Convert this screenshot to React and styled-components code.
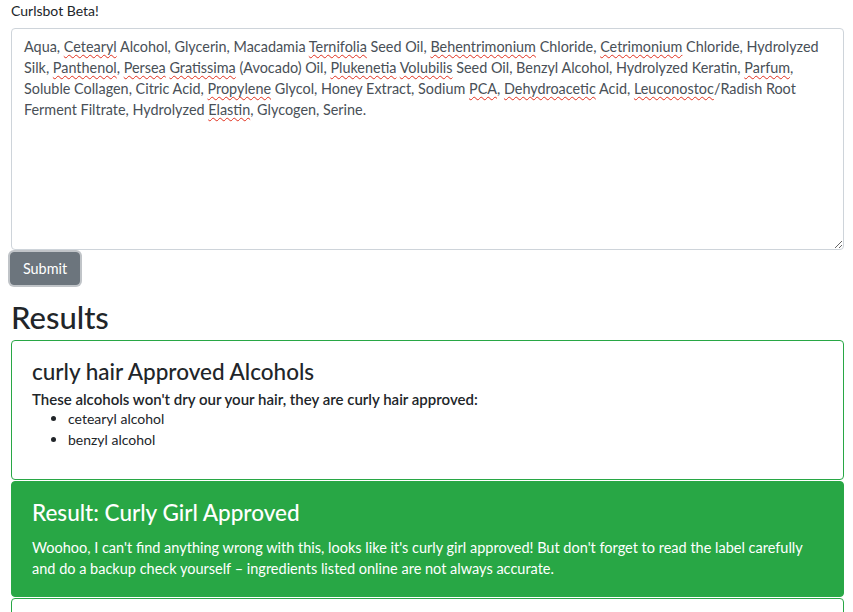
import styled, { createGlobalStyle } from 'styled-components';

const GlobalStyle = createGlobalStyle`
    body {
        margin: 0;
        background: #fff;
        font-family: Lato, "Open Sans", sans-serif;
        color: #212529;
    }
`;

const INGREDIENT_LINES = [
    [['Aqua, '], ['Cetearyl', true], [' Alcohol, Glycerin, Macadamia '], ['Ternifolia', true], [' Seed Oil, '], ['Behentrimonium', true], [' Chloride, '], ['Cetrimonium', true], [' Chloride, Hydrolyzed']],
    [['Silk, '], ['Panthenol', true], [', '], ['Persea', true], [' '], ['Gratissima', true], [' (Avocado) Oil, '], ['Plukenetia', true], [' '], ['Volubilis', true], [' Seed Oil, Benzyl Alcohol, Hydrolyzed Keratin, '], ['Parfum', true], [',']],
    [['Soluble Collagen, Citric Acid, '], ['Propylene', true], [' Glycol, Honey Extract, Sodium '], ['PCA', true], [', '], ['Dehydroacetic', true], [' Acid, '], ['Leuconostoc', true], ['/Radish Root']],
    [['Ferment Filtrate, Hydrolyzed '], ['Elastin', true], [', Glycogen, Serine.']],
];

const App = () => {
    return (
        <>
            <GlobalStyle />
            <Page>
                <Label>Curlsbot Beta!</Label>
                <TextBox role="textbox" aria-multiline="true">
                    {INGREDIENT_LINES.map((line, i) => (
                        <Line key={i}>
                            {line.map(([text, misspelt], j) =>
                                misspelt ? <Misspelt key={j}>{text}</Misspelt> : <span key={j}>{text}</span>
                            )}
                        </Line>
                    ))}
                </TextBox>
                <SubmitButton type="button">Submit</SubmitButton>
                <Heading>Results</Heading>
                <Card $height="140px">
                    <CardTitle>curly hair Approved Alcohols</CardTitle>
                    <CardLead>These alcohols won't dry our your hair, they are curly hair approved:</CardLead>
                    <List>
                        <li>cetearyl alcohol</li>
                        <li>benzyl alcohol</li>
                    </List>
                </Card>
                <Card $variant="success" $height="116px">
                    <CardTitle $light>Result: Curly Girl Approved</CardTitle>
                    <CardText>
                        Woohoo, I can't find anything wrong with this, looks like it's curly girl approved! But don't forget to read the label carefully
                        <br />
                        and do a backup check yourself – ingredients listed online are not always accurate.
                    </CardText>
                </Card>
                <Card $height="40px" />
            </Page>
        </>
    );
};
export default App;

const Page = styled.div`
    padding: 0 9px 0 11px;
`;

const Label = styled.div`
    font-size: 14px;
    line-height: 21px;
    margin-bottom: 7px;
`;

const TextBox = styled.div`
    box-sizing: border-box;
    height: 222px;
    padding: 7px 12px;
    border: 1px solid #ced4da;
    border-radius: 4px;
    font-size: 14.4px;
    line-height: 21px;
    color: #495057;
    overflow: auto;
    resize: vertical;
    white-space: nowrap;
`;

const Line = styled.div``;

const Misspelt = styled.span`
    text-decoration: underline wavy #e0301e;
    text-decoration-thickness: 1px;
    text-underline-offset: 2px;
`;

const SubmitButton = styled.button`
    display: block;
    margin: 2px 0 0 -1px;
    width: 70px;
    height: 33px;
    padding: 0;
    border: 1px solid #6c757d;
    border-radius: 4px;
    background: #6c757d;
    color: #fff;
    font-family: inherit;
    font-size: 14.4px;
    box-shadow: 0 0 0 2px rgba(130, 138, 145, 0.5);
`;

const Heading = styled.h2`
    margin: 14px 0 4px;
    font-size: 31px;
    line-height: 37px;
    font-weight: 500;
`;

const Card = styled.div`
    box-sizing: border-box;
    height: ${({ $height }) => $height};
    padding: 17px 20px 20px;
    border: 1px solid #28a745;
    border-radius: 4px;
    background: ${({ $variant }) => ($variant === 'success' ? '#28a745' : '#fff')};
    color: ${({ $variant }) => ($variant === 'success' ? '#fff' : '#212529')};

    & + & {
        margin-top: 1px;
    }
`;

const CardTitle = styled.h3`
    margin: 0 0 4px;
    font-size: 22.5px;
    line-height: 28px;
    font-weight: 500;
    color: ${({ $light }) => ($light ? '#fff' : '#212529')};
`;

const CardLead = styled.div`
    font-size: 15px;
    line-height: 18px;
    font-weight: 600;
`;

const List = styled.ul`
    margin: 0;
    padding-left: 36px;
    font-size: 14px;
    line-height: 21px;

    li::marker {
        font-size: 15px;
    }
`;

const CardText = styled.p`
    margin: 10px 0 0;
    font-size: 14.5px;
    line-height: 21px;
    white-space: nowrap;
`;
